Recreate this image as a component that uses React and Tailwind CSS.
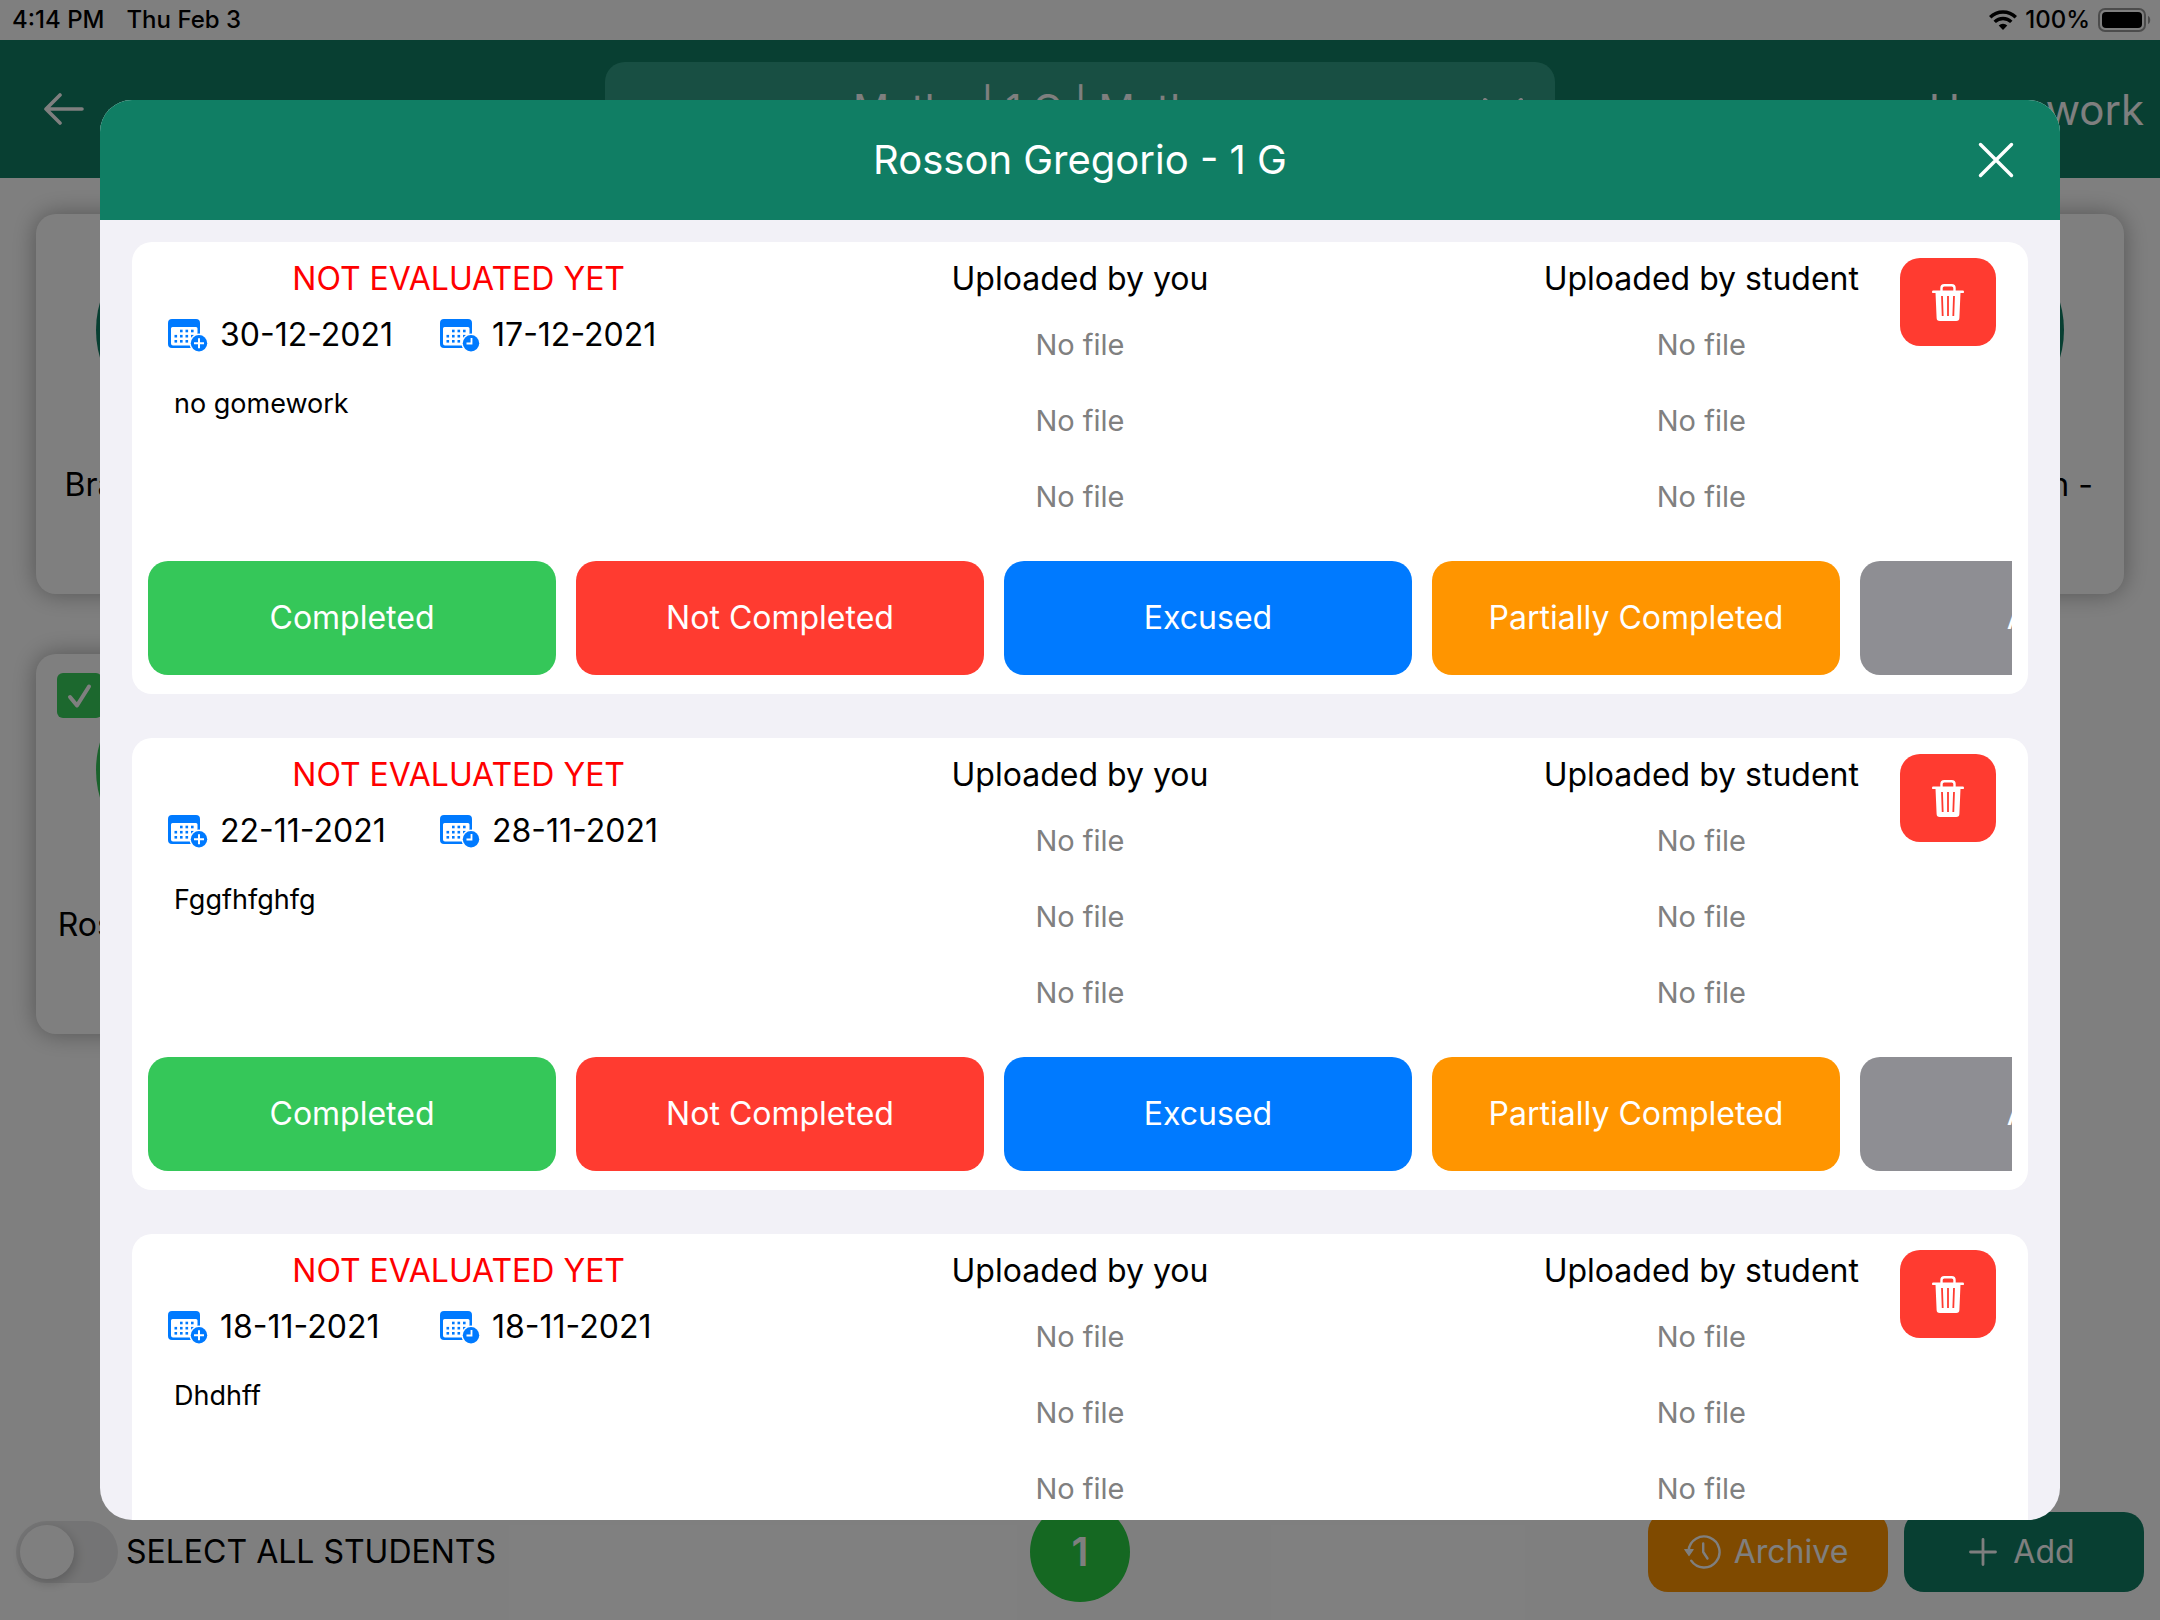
import { useState } from "react";

const homeworks = [
  { id: 1, assigned: "30-12-2021", due: "17-12-2021", text: "no gomework" },
  { id: 2, assigned: "22-11-2021", due: "28-11-2021", text: "Fggfhfghfg" },
  { id: 3, assigned: "18-11-2021", due: "18-11-2021", text: "Dhdhff" },
];

const statuses = [
  { label: "Completed", color: "bg-[#35c759]" },
  { label: "Not Completed", color: "bg-[#ff3b30]" },
  { label: "Excused", color: "bg-[#007aff]" },
  { label: "Partially Completed", color: "bg-[#ff9500]" },
  { label: "Archive", color: "bg-[#8e8e93]" },
];

const students = [
  { name: "Brasca Beatrice -", selected: false },
  { name: "Conti Marco -", selected: false },
  { name: "Costa Giulia -", selected: false },
  { name: "Ferri Paolo -", selected: false },
  { name: "Galli Anna -", selected: false },
  { name: "Lombardi Kevin -", selected: false },
  { name: "Rosson Gregorio -", selected: true },
];

const CalendarIcon = ({ type }) => (
  <svg viewBox="0 0 40 33" className="w-10 h-[33px] text-[#007aff]" fill="currentColor" aria-hidden="true">
    <path fillRule="evenodd" d="M4 0h24a4 4 0 0 1 4 4v25H4a4 4 0 0 1-4-4V4a4 4 0 0 1 4-4zM4.500 8a1.500 1.500 0 0 0-1.500 1.500v15a2 2 0 0 0 2 2h23a1.500 1.500 0 0 0 1.500-1.500V9.500A1.500 1.500 0 0 0 28 8z" />
    {[12, 17.5, 23].map((x) => <rect key={x} x={x} y="10.700" width="2.600" height="2.600" />)}
    {[6.5, 12, 17.5, 23].map((x) => <rect key={x} x={x} y="15.900" width="2.600" height="2.600" />)}
    {[6.5, 12, 17.5].map((x) => <rect key={x} x={x} y="21" width="2.600" height="2.600" />)}
    <circle cx="31" cy="24.200" r="9.600" fill="white" />
    <circle cx="31" cy="24.200" r="8.200" />
    {type === "plus" ? (
      <path d="M31 19.200v10M26 24.200h10" stroke="white" strokeWidth="2" />
    ) : (
      <path d="M31.500 19v5.500h-5" stroke="white" strokeWidth="1.800" fill="none" />
    )}
  </svg>
);

const TrashIcon = () => (
  <svg viewBox="0 0 32 37" className="w-8 h-[37px]" fill="none" aria-hidden="true">
    <path d="M9.500 7.500V4a2.800 2.800 0 0 1 2.800-2.800h7.400A2.800 2.800 0 0 1 22.500 4v3.500" stroke="white" strokeWidth="2.400" />
    <rect x="0" y="6.500" width="32" height="2.600" rx="1.200" fill="white" />
    <path d="M3.500 8.500h25l-1.100 25.300a3.200 3.200 0 0 1-3.200 3.200H7.800a3.200 3.200 0 0 1-3.200-3.200z" fill="white" />
    <path d="M10 12l.7 20M16 12v20M22 12l-.7 20" stroke="#ff3b30" strokeWidth="1.800" />
  </svg>
);

const StatusBar = () => (
  <div className="h-10 pl-3 pr-2 flex items-center justify-between text-2xl font-medium">
    <div className="flex gap-[22px]">
      <span>4:14 PM</span>
      <span>Thu Feb 3</span>
    </div>
    <div className="flex items-center gap-2">
      <svg viewBox="0 0 28 20" className="w-7 h-5" fill="none" stroke="black" strokeWidth="3.400" aria-hidden="true">
        <path d="M1.200 7.200a18.200 18.200 0 0 1 25.600 0" />
        <path d="M5.700 11.900a11.800 11.800 0 0 1 16.600 0" />
        <path d="M14 20l-4.300-4.600a6.200 6.200 0 0 1 8.600 0z" fill="black" stroke="none" />
      </svg>
      <span>100%</span>
      <svg viewBox="0 0 54 24" className="w-[54px] h-6" aria-hidden="true">
        <rect x="1" y="1" width="46" height="22" rx="6" fill="none" stroke="black" strokeOpacity=".4" strokeWidth="2" />
        <rect x="4" y="4" width="40" height="16" rx="4" fill="black" />
        <path d="M50 8c3 1 3 7 0 8z" fill="black" fillOpacity=".4" />
      </svg>
    </div>
  </div>
);

const FileList = ({ title }) => (
  <div className="flex flex-col items-center">
    <h3 className="text-[32px] leading-10">{title}</h3>
    <ul className="mt-2 text-[29px] text-[#808080] text-center">
      <li className="h-[76px] flex items-center">No file</li>
      <li className="h-[76px] flex items-center">No file</li>
      <li className="h-[76px] flex items-center">No file</li>
    </ul>
  </div>
);

const HomeworkCard = ({ homework }) => (
  <article className="relative bg-white rounded-[20px] px-4 pt-[17px] pb-[19px] shrink-0">
    <div className="grid grid-cols-3">
      <div>
        <h3 className="text-[32px] leading-10 text-center text-[#ff0000]">NOT EVALUATED YET</h3>
        <div className="mt-4 pl-5 flex text-[32px] leading-10">
          <div className="w-[272px] flex items-center gap-3">
            <CalendarIcon type="plus" />
            <span>{homework.assigned}</span>
          </div>
          <div className="flex items-center gap-3">
            <CalendarIcon type="clock" />
            <span>{homework.due}</span>
          </div>
        </div>
        <p className="mt-[29px] pl-[26px] text-[27px] leading-10">{homework.text}</p>
      </div>
      <FileList title="Uploaded by you" />
      <FileList title="Uploaded by student" />
    </div>
    <div className="mt-[26px] flex gap-5 overflow-hidden">
      {statuses.map((status) => (
        <button key={status.label} className={`${status.color} w-[408px] h-[114px] shrink-0 rounded-[20px] text-white text-[32px]`}>
          {status.label}
        </button>
      ))}
    </div>
    <button aria-label="Delete homework" className="absolute top-4 right-8 w-24 h-[88px] rounded-[20px] bg-[#ff3b30] flex items-center justify-center">
      <TrashIcon />
    </button>
  </article>
);

const StudentCard = ({ student }) => (
  <div className="relative h-[380px] rounded-[20px] bg-white pt-4 flex flex-col items-center shadow-[0_0_24px_rgba(0,0,0,0.35)]">
    <div className={`size-[200px] rounded-full ${student.selected ? "bg-[#34c759]" : "bg-[#107e64]"}`}></div>
    <p className="mt-[35px] text-[32px] leading-10 whitespace-nowrap">{student.name}</p>
    {student.selected && (
      <label className="absolute top-[19px] left-[21px] size-[45px]">
        <input type="checkbox" defaultChecked aria-label={student.name} className="appearance-none block size-full rounded-md bg-[#38d05c]" />
        <svg viewBox="0 0 45 45" className="absolute inset-0" fill="none" stroke="white" strokeWidth="4" strokeLinecap="round" strokeLinejoin="round" aria-hidden="true">
          <path d="M13 24l7 8.500L32 13.500" />
        </svg>
      </label>
    )}
  </div>
);

const App = () => {
  const [allSelected, setAllSelected] = useState(false);

  return (
    <div className="relative h-screen flex flex-col overflow-hidden bg-white text-black font-['Inter',sans-serif]">
      <StatusBar />
      <header className="h-[138px] px-4 grid grid-cols-[1fr_950px_1fr] items-center bg-[#107e64] text-white">
        <button aria-label="Back" className="justify-self-start pl-7">
          <svg viewBox="0 0 40 32" className="w-10 h-8" fill="none" stroke="white" strokeWidth="3.600" strokeLinecap="round" strokeLinejoin="round" aria-hidden="true">
            <path d="M38 16H2M16 2L2 16l14 14" />
          </svg>
        </button>
        <button className="h-[94px] pr-8 flex items-center gap-5 rounded-[20px] bg-[#319f86] text-[40px]">
          <span className="flex-1">Maths | 1 G | Maths</span>
          <svg viewBox="0 0 40 22" className="w-10 h-[22px]" fill="none" stroke="white" strokeWidth="4" strokeLinecap="round" strokeLinejoin="round" aria-hidden="true">
            <path d="M2 2l18 18L38 2" />
          </svg>
        </button>
        <h1 className="justify-self-end text-[42px]">Homework</h1>
      </header>

      <main className="flex-1 px-9 pt-9 grid grid-cols-6 content-start gap-x-[34px] gap-y-[60px]">
        {students.map((student) => (
          <StudentCard key={student.name} student={student} />
        ))}
      </main>

      <footer className="px-4 pb-[18px] grid grid-cols-[1fr_auto_1fr] items-center text-[32px]">
        <label className="flex items-center gap-2">
          <input
            type="checkbox"
            role="switch"
            checked={allSelected}
            onChange={(e) => setAllSelected(e.target.checked)}
            className="appearance-none w-[102px] h-[62px] p-1 rounded-full bg-[#e9e9ea] checked:bg-[#34c759] before:block before:size-[54px] before:rounded-full before:bg-white before:shadow-[2px_4px_12px_rgba(0,0,0,0.2)] checked:before:ml-10"
          />
          SELECT ALL STUDENTS
        </label>
        <span className="size-[100px] rounded-full bg-[#2ad044] text-white text-[40px] font-semibold flex items-center justify-center">1</span>
        <div className="flex justify-end gap-4 text-white">
          <button className="w-60 h-20 pr-1 rounded-[20px] bg-[#ff9500] flex items-center justify-center gap-3">
            <svg viewBox="0 0 38 36" className="w-[38px] h-9" fill="none" stroke="white" strokeWidth="2.400" strokeLinecap="round" strokeLinejoin="round" aria-hidden="true">
              <path d="M4.600 16.500A15.500 15.500 0 1 1 7.200 26.700" />
              <path d="M.8 15.500h8.400L5 21.500z" fill="white" strokeWidth="1.200" />
              <path d="M19.200 9.500V18l4.300 6.500" />
            </svg>
            Archive
          </button>
          <button className="w-60 h-20 pr-1 rounded-[20px] bg-[#107e64] flex items-center justify-center gap-4">
            <svg viewBox="0 0 28 28" className="size-7" stroke="white" strokeWidth="2.800" strokeLinecap="round" aria-hidden="true">
              <path d="M14 1.500v25M1.500 14h25" />
            </svg>
            Add
          </button>
        </div>
      </footer>

      <div className="absolute inset-0 p-[100px] bg-black/50">
        <section role="dialog" aria-labelledby="dialog-title" className="h-full flex flex-col overflow-hidden rounded-[32px] bg-[#f2f1f7]">
          <div className="h-[120px] shrink-0 px-[46px] grid grid-cols-[1fr_auto_1fr] items-center bg-[#107e64] text-white">
            <h2 id="dialog-title" className="col-start-2 text-[40px]">Rosson Gregorio - 1 G</h2>
            <button aria-label="Close" className="justify-self-end">
              <svg viewBox="0 0 36 36" className="size-9" stroke="white" strokeWidth="3.400" strokeLinecap="round" aria-hidden="true">
                <path d="M2.500 2.500l31 31M33.500 2.500l-31 31" />
              </svg>
            </button>
          </div>
          <div className="flex-1 min-h-0 px-8 pt-[22px] flex flex-col gap-11 overflow-hidden">
            {homeworks.map((homework) => (
              <HomeworkCard key={homework.id} homework={homework} />
            ))}
          </div>
        </section>
      </div>
    </div>
  );
};

export default App;
